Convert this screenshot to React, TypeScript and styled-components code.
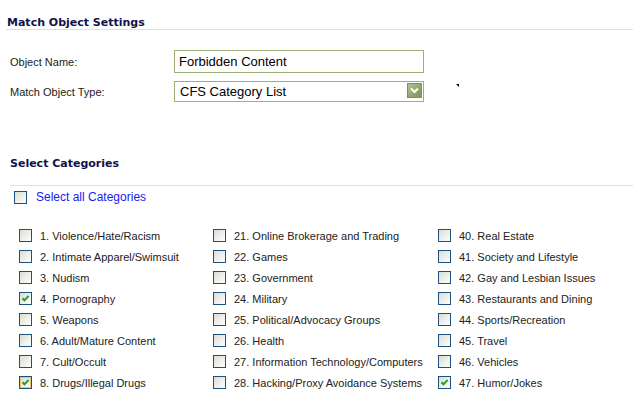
import React from "react";
import styled, { createGlobalStyle } from "styled-components";

const GlobalStyle = createGlobalStyle`
  html, body {
    margin: 0;
    padding: 0;
    background: #fff;
  }
  body {
    font-family: "Liberation Sans", Arial, sans-serif;
    font-size: 11px;
    color: #222;
  }
`;

const Page = styled.div`
  width: 633px;
  height: 394px;
  overflow: hidden;
  background: #fff;
`;

const SectionTitle = styled.div<{ $left: number; $top: number }>`
  margin-top: ${p => p.$top}px;
  padding-left: ${p => p.$left}px;
  font-family: "DejaVu Sans", Verdana, sans-serif;
  font-weight: bold;
  font-size: 11px;
  line-height: 13px;
  color: #12124a;
`;

const Divider = styled.div<{ $left: number; $gap: number }>`
  margin-top: ${p => p.$gap}px;
  margin-left: ${p => p.$left}px;
  height: 1px;
  background: #e0e0e0;
`;

const Form = styled.div`
  margin-top: 20px;
  padding-left: 10px;
  display: grid;
  grid-template-columns: 164px auto;
  row-gap: 8px;
  align-items: center;
`;

const FieldLabel = styled.div`
  font-size: 11px;
  color: #222;
`;

const FieldCell = styled.div`
  display: flex;
  align-items: flex-start;
`;

const TextBox = styled.div`
  box-sizing: border-box;
  width: 250px;
  height: 23px;
  border: 1px solid #9cb07a;
  padding: 3px 0 0 4px;
  font-size: 13px;
  color: #000;
`;

const SelectBox = styled.div`
  box-sizing: border-box;
  width: 250px;
  height: 21px;
  border: 1px solid #9cb07a;
  padding: 1px 1px 0 5px;
  display: flex;
  align-items: flex-start;
  justify-content: space-between;
  font-size: 13px;
  color: #000;
`;

const SelectText = styled.span`
  line-height: 17px;
`;

const ArrowButton = styled.span`
  box-sizing: border-box;
  width: 15px;
  height: 15px;
  border: 1px solid #7d935c;
  background: linear-gradient(135deg, #b3c494 0%, #8ea46b 60%, #7f9660 100%);
  display: flex;
  align-items: center;
  justify-content: center;
`;

const CursorMark = styled.span`
  margin-left: 32px;
  margin-top: 3px;
  width: 0;
  height: 0;
  border-top: 3px solid #000;
  border-left: 3px solid transparent;
`;

const SelectAllRow = styled.div`
  display: flex;
  align-items: center;
  gap: 9px;
  padding: 4px 0 0 14px;
`;

const LinkText = styled.span`
  font-size: 12px;
  color: #1a1aee;
`;

const Grid = styled.div`
  margin-top: 21px;
  padding-left: 19px;
  display: grid;
  grid-template-columns: 194px 225px 1fr;
  grid-auto-flow: column;
  grid-template-rows: repeat(8, 21px);
`;

const Item = styled.label`
  display: flex;
  align-items: center;
  gap: 8px;
  font-size: 11px;
  color: #222;
  white-space: nowrap;
`;

const Box = styled.span<{ $focus?: boolean }>`
  box-sizing: border-box;
  flex: none;
  width: 13px;
  height: 13px;
  border: 1px solid #1c5180;
  background: linear-gradient(135deg, #dcdcd6 0%, #f4f4f2 70%, #fff 100%);
  display: flex;
  align-items: center;
  justify-content: center;
  box-shadow: ${p => (p.$focus ? "inset 0 0 0 1px #f3c06a" : "none")};
`;

const Check = () => (
  <svg width="9" height="9" viewBox="0 0 9 9">
    <path d="M1.5 4.2 L3.5 6.3 L7.6 1.8" fill="none" stroke="#21a121" strokeWidth="2" />
  </svg>
);

const Chevron = () => (
  <svg width="9" height="7" viewBox="0 0 9 7">
    <path d="M1 1.5 L4.5 5 L8 1.5" fill="none" stroke="#fff" strokeWidth="2" />
  </svg>
);

const categories: { label: string; checked?: boolean; focus?: boolean }[] = [
  { label: "1. Violence/Hate/Racism" },
  { label: "2. Intimate Apparel/Swimsuit" },
  { label: "3. Nudism" },
  { label: "4. Pornography", checked: true },
  { label: "5. Weapons" },
  { label: "6. Adult/Mature Content" },
  { label: "7. Cult/Occult" },
  { label: "8. Drugs/Illegal Drugs", checked: true, focus: true },
  { label: "21. Online Brokerage and Trading" },
  { label: "22. Games" },
  { label: "23. Government" },
  { label: "24. Military" },
  { label: "25. Political/Advocacy Groups" },
  { label: "26. Health" },
  { label: "27. Information Technology/Computers" },
  { label: "28. Hacking/Proxy Avoidance Systems" },
  { label: "40. Real Estate" },
  { label: "41. Society and Lifestyle" },
  { label: "42. Gay and Lesbian Issues" },
  { label: "43. Restaurants and Dining" },
  { label: "44. Sports/Recreation" },
  { label: "45. Travel" },
  { label: "46. Vehicles" },
  { label: "47. Humor/Jokes", checked: true },
];

const App: React.FC = () => {
  return (
    <Page>
      <GlobalStyle />
      <SectionTitle $left={7} $top={16}>Match Object Settings</SectionTitle>
      <Divider $left={6} $gap={0} />

      <Form>
        <FieldLabel>Object Name:</FieldLabel>
        <FieldCell>
          <TextBox>Forbidden Content</TextBox>
        </FieldCell>
        <FieldLabel>Match Object Type:</FieldLabel>
        <FieldCell>
          <SelectBox>
            <SelectText>CFS Category List</SelectText>
            <ArrowButton>
              <Chevron />
            </ArrowButton>
          </SelectBox>
          <CursorMark />
        </FieldCell>
      </Form>

      <SectionTitle $left={10} $top={55}>Select Categories</SectionTitle>
      <Divider $left={10} $gap={15} />

      <SelectAllRow>
        <Box />
        <LinkText>Select all Categories</LinkText>
      </SelectAllRow>

      <Grid>
        {categories.map(c => (
          <Item key={c.label}>
            <Box $focus={c.focus}>{c.checked && <Check />}</Box>
            {c.label}
          </Item>
        ))}
      </Grid>
    </Page>
  );
};

export default App;
